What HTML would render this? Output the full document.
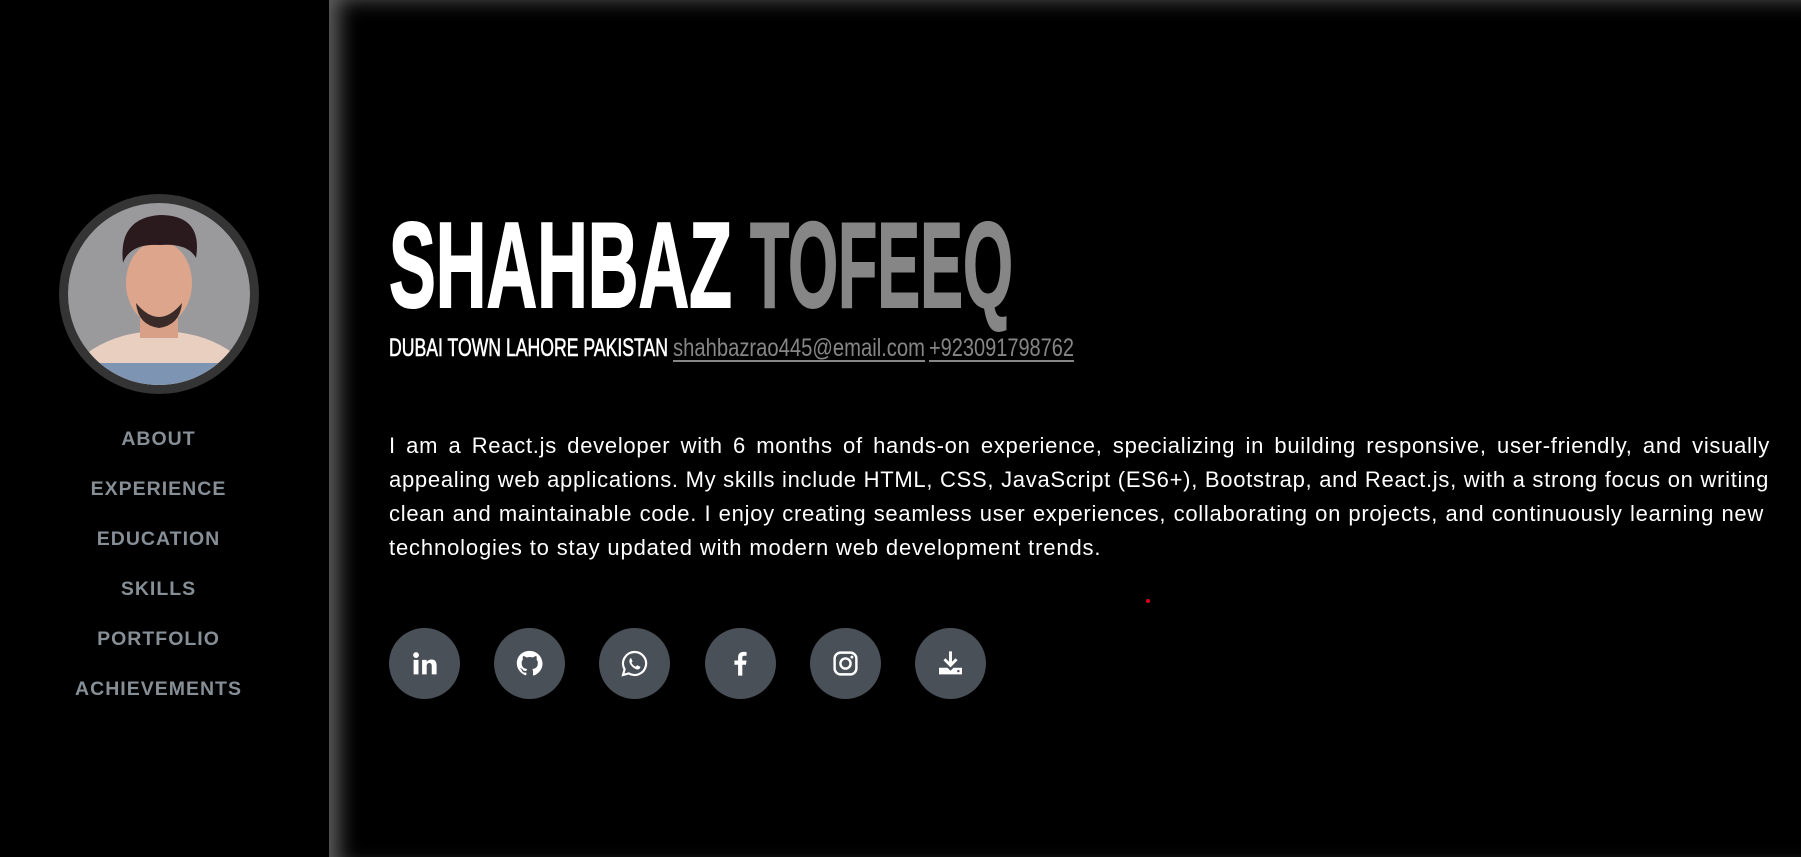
<!DOCTYPE html>
<html><head><meta charset="utf-8"><style>
html,body{margin:0;padding:0;background:#000;width:1801px;height:857px;overflow:hidden;font-family:"Liberation Sans",sans-serif}
#side{position:absolute;left:0;top:0;width:329px;height:857px;background:#000}
#main{position:absolute;left:329px;top:0;width:1472px;height:857px;background:#000;box-shadow:inset 16px 5px 20px -6px rgba(110,110,110,.85)}
.av{position:absolute;left:59px;top:194px;width:182px;height:182px;border-radius:50%;border:9px solid #343434;background:#9a9a9c;overflow:hidden}
.nav{position:absolute;left:0;width:317px;text-align:center;color:#868e96;font-weight:bold;font-size:19.5px;letter-spacing:1px}
.p{position:absolute;left:389px;top:429px;width:1381px;color:#fff;font-size:22px;letter-spacing:0.72px;line-height:34px}
.p div{white-space:nowrap;text-align:justify;text-align-last:justify}
.p div.l{text-align-last:left;letter-spacing:0.85px}
.p div.m{text-align-last:left;width:1375px}
.ic{position:absolute;top:628px;width:71px;height:71px;border-radius:50%;background:#495057}
.ic svg{position:absolute;left:21px;top:21px;width:29px;height:29px}
</style></head><body>
<div id="side">
 <div class="av">
  <svg width="182" height="182" viewBox="0 0 182 182">
   <ellipse cx="92" cy="190" rx="95" ry="62" fill="#e8cfc0"/>
   <rect x="0" y="160" width="182" height="30" fill="#7d94b3"/>
   <rect x="72" y="95" width="38" height="40" fill="#d9a088"/>
   <ellipse cx="91" cy="80" rx="33" ry="42" fill="#dca58c"/>
   <path d="M55 60 Q50 15 92 12 Q135 12 128 55 Q120 40 92 42 Q62 40 55 60Z" fill="#2a1a1e"/>
   <path d="M68 100 Q91 128 114 100 Q112 122 91 125 Q70 122 68 100Z" fill="#3a2a28"/>
  </svg>
 </div>
 <div class="nav" style="top:428px">ABOUT</div>
 <div class="nav" style="top:478px">EXPERIENCE</div>
 <div class="nav" style="top:528px">EDUCATION</div>
 <div class="nav" style="top:578px">SKILLS</div>
 <div class="nav" style="top:628px">PORTFOLIO</div>
 <div class="nav" style="top:678px">ACHIEVEMENTS</div>
</div>
<div id="main"></div>
<svg style="position:absolute;left:0;top:0" width="1801" height="400">
 <text x="389" y="307" font-family="Liberation Sans" font-weight="bold" font-size="122" fill="#fff" stroke="#fff" stroke-width="2" textLength="343" lengthAdjust="spacingAndGlyphs">SHAHBAZ</text>
 <text x="750" y="307" font-family="Liberation Sans" font-weight="bold" font-size="122" fill="#868686" stroke="#868686" stroke-width="2" textLength="263" lengthAdjust="spacingAndGlyphs">TOFEEQ</text>
 <text x="389" y="356" font-family="Liberation Sans" font-size="25" fill="#fff" stroke="#fff" stroke-width="0.6" textLength="279" lengthAdjust="spacingAndGlyphs">DUBAI TOWN LAHORE PAKISTAN</text>
 <text x="673" y="356" font-family="Liberation Sans" font-size="25" fill="#868686" textLength="252" lengthAdjust="spacingAndGlyphs">shahbazrao445@email.com</text>
 <text x="929" y="356" font-family="Liberation Sans" font-size="25" fill="#868686" textLength="145" lengthAdjust="spacingAndGlyphs">+923091798762</text>
 <rect x="673" y="360" width="252" height="2" fill="#868686"/>
 <rect x="929" y="360" width="145" height="2" fill="#868686"/>
</svg>
<div class="p">
<div>I am a React.js developer with 6 months of hands-on experience, specializing in building responsive, user-friendly, and visually</div>
<div class="m">appealing web applications. My skills include HTML, CSS, JavaScript (ES6+), Bootstrap, and React.js, with a strong focus on writing</div>
<div style="width:1375px">clean and maintainable code. I enjoy creating seamless user experiences, collaborating on projects, and continuously learning new</div>
<div class="l">technologies to stay updated with modern web development trends.</div>
</div>
<div style="position:absolute;left:1146px;top:599px;width:4px;height:4px;border-radius:50%;background:#e0001a"></div>
<div class="ic" style="left:389px"><svg viewBox="0 0 24 24"><circle cx="5" cy="5" r="2.4" fill="#fff"/><rect x="3" y="9" width="4" height="12" fill="#fff"/><path d="M10 9h3.8v1.8c.6-1.1 2-2.1 4-2.1 3.6 0 4.2 2.3 4.2 5.3V21h-4v-6.2c0-1.5 0-3.2-2-3.2s-2.2 1.5-2.2 3.1V21H10Z" fill="#fff"/></svg></div>
<div class="ic" style="left:494px"><svg viewBox="0 0 24 24"><path d="M12 1.5C6 1.5 1.5 6 1.5 11.8c0 4.6 3 8.5 7.2 9.9.5.1.7-.2.7-.5v-1.8c-2.9.6-3.5-1.3-3.5-1.3-.5-1.2-1.2-1.5-1.2-1.5-1-.6.1-.6.1-.6 1 .1 1.6 1.1 1.6 1.1.9 1.6 2.5 1.1 3.1.9.1-.7.4-1.1.7-1.4-2.3-.3-4.7-1.2-4.7-5.1 0-1.1.4-2 1.1-2.8-.1-.3-.5-1.3.1-2.8 0 0 .9-.3 2.9 1.1a10 10 0 0 1 5.2 0c2-1.4 2.9-1.1 2.9-1.1.6 1.5.2 2.5.1 2.8.7.8 1.1 1.7 1.1 2.8 0 4-2.4 4.8-4.7 5.1.4.3.7 1 .7 1.9v2.9c0 .3.2.6.7.5 4.2-1.4 7.2-5.3 7.2-9.9C22.5 6 18 1.5 12 1.5Z" fill="#fff"/></svg></div>
<div class="ic" style="left:599px"><svg viewBox="0 0 24 24"><path d="M12 2.5a9.5 9.5 0 0 0-8.2 14.3L2.5 21.5l4.8-1.3A9.5 9.5 0 1 0 12 2.5Z" fill="none" stroke="#fff" stroke-width="1.8"/><path d="M8.6 7.5c.3 0 .6 0 .8.5l.9 2c.1.3 0 .5-.2.7l-.6.7c.8 1.5 2 2.6 3.5 3.3l.8-.9c.2-.2.4-.3.7-.2l2 .9c.3.2.4.4.3.7-.3 1.2-1.4 1.8-2.3 1.8-2.7-.3-6.3-3.4-6.8-6.4 0-1 .4-2.5.9-3.1Z" fill="#fff"/></svg></div>
<div class="ic" style="left:705px"><svg viewBox="0 0 24 24"><path d="M13.5 22v-9h3l.5-3.5h-3.5V7.3c0-1 .3-1.7 1.8-1.7H17V2.5c-.3 0-1.4-.1-2.6-.1-2.6 0-4.4 1.6-4.4 4.5v2.6H7V13h3v9Z" fill="#fff"/></svg></div>
<div class="ic" style="left:810px"><svg viewBox="0 0 24 24"><rect x="3" y="3" width="18" height="18" rx="5" fill="none" stroke="#fff" stroke-width="2"/><circle cx="12" cy="12" r="4.2" fill="none" stroke="#fff" stroke-width="2"/><circle cx="17.3" cy="6.7" r="1.2" fill="#fff"/></svg></div>
<div class="ic" style="left:915px"><svg viewBox="0 0 24 24"><path d="M12 2v11M7 8.5l5 5 5-5" fill="none" stroke="#fff" stroke-width="2.4"/><path d="M2.5 15.5h7l2.5 2.5 2.5-2.5h7v5.5h-19Z" fill="#fff"/><circle cx="18.5" cy="18.3" r="1" fill="#495057"/></svg></div>
</body></html>
